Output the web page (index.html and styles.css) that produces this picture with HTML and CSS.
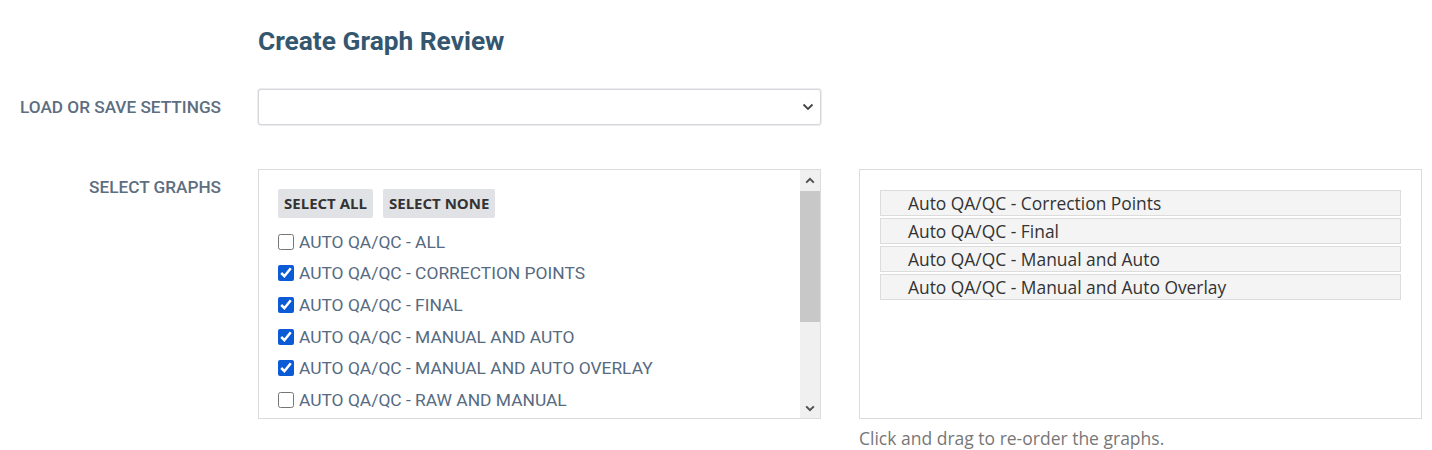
FILE: index.html
```html
<!DOCTYPE html>
<html lang="en">
<head>
  <meta charset="UTF-8" />
  <title>Create Graph Review</title>
  <link rel="stylesheet" href="styles.css">
</head>
<body>

  <div class="page">
    <div class="row title-row">
      <div class="label"></div>
      <h1 class="title">Create Graph Review</h1>
    </div>

    <div class="row settings-row">
      <label class="label" for="settings">Load or save settings</label>
      <div class="select-wrap">
        <select id="settings" class="settings-select">
          <option value=""></option>
        </select>
        <svg class="chevron" width="12" height="8" viewBox="0 0 12 8">
          <path d="M1.5 1.5 L6 6 L10.5 1.5" fill="none" stroke="#444" stroke-width="1.8"/>
        </svg>
      </div>
    </div>

    <div class="row graphs-row">
      <div class="label">Select graphs</div>

      <div class="graph-list">
        <div class="list-body">
          <div class="list-buttons">
            <button onclick="selectAll(true)">SELECT ALL</button>
            <button onclick="selectAll(false)">SELECT NONE</button>
          </div>
          <label class="graph-item"><input type="checkbox"> Auto QA/QC - All</label>
          <label class="graph-item"><input type="checkbox" checked> Auto QA/QC - Correction Points</label>
          <label class="graph-item"><input type="checkbox" checked> Auto QA/QC - Final</label>
          <label class="graph-item"><input type="checkbox" checked> Auto QA/QC - Manual and Auto</label>
          <label class="graph-item"><input type="checkbox" checked> Auto QA/QC - Manual and Auto Overlay</label>
          <label class="graph-item"><input type="checkbox"> Auto QA/QC - Raw and Manual</label>
        </div>
        <div class="scrollbar">
          <div class="scroll-btn">
            <svg width="10" height="7" viewBox="0 0 10 7"><path d="M1.2 5.6 L5 1.8 L8.8 5.6" fill="none" stroke="#505050" stroke-width="2"/></svg>
          </div>
          <div class="scroll-thumb"></div>
          <div class="scroll-track"></div>
          <div class="scroll-btn down">
            <svg width="10" height="7" viewBox="0 0 10 7"><path d="M1.2 1.4 L5 5.2 L8.8 1.4" fill="none" stroke="#505050" stroke-width="2"/></svg>
          </div>
        </div>
      </div>

      <div class="order-col">
        <ul class="order-list">
          <li>Auto QA/QC - Correction Points</li>
          <li>Auto QA/QC - Final</li>
          <li>Auto QA/QC - Manual and Auto</li>
          <li>Auto QA/QC - Manual and Auto Overlay</li>
        </ul>
        <p class="help">Click and drag to re-order the graphs.</p>
      </div>
    </div>
  </div>

  <script>
    function selectAll(on) {
      document.querySelectorAll('.graph-item input').forEach(function (cb) {
        cb.checked = on;
      });
    }
  </script>
</body>
</html>
```

FILE: styles.css
```css
body {
  margin: 0;
  background: #ffffff;
  font-family: Roboto, 'Liberation Sans', sans-serif;
  color: #333;
}
.page {
  padding-top: 25px;
}
.row {
  display: flex;
  gap: 37px;
}
.label {
  width: 221px;
  flex-shrink: 0;
  text-align: right;
  text-transform: uppercase;
  font-size: 17.2px;
  font-weight: 500;
  color: #5d6e80;
}
.title {
  margin: 0;
  font-size: 26.3px;
  line-height: 32px;
  font-weight: 700;
  color: #34566f;
}
.settings-row {
  margin-top: 32px;
  align-items: center;
}
.select-wrap {
  position: relative;
  width: 563px;
}
.settings-select {
  display: block;
  width: 100%;
  height: 36px;
  border: 1px solid #d6d6db;
  box-shadow: 0 0 0 1px #ececef;
  border-radius: 3px;
  background: #fff;
  appearance: none;
  font-size: 16px;
}
.chevron {
  position: absolute;
  right: 7px;
  top: 14px;
  pointer-events: none;
}
.graphs-row {
  margin-top: 44px;
}
.graphs-row > .label {
  padding-top: 8px;
}
.graph-list {
  display: flex;
  width: 563px;
  height: 250px;
  box-sizing: border-box;
  border: 1px solid #dcdcdc;
  overflow: hidden;
}
.list-body {
  flex: 1;
  padding: 19px 19px 0;
  overflow: hidden;
}
.list-buttons {
  display: flex;
  gap: 10px;
  margin-bottom: 8px;
}
.list-buttons button {
  font-family: 'Open Sans', sans-serif;
  font-weight: 700;
  font-size: 15px;
  color: #333;
  background: #e1e2e5;
  border: none;
  border-radius: 2px;
  height: 29px;
  padding: 0 6px 1px;
  cursor: pointer;
}
.graph-item {
  display: flex;
  align-items: center;
  gap: 5px;
  height: 31.6px;
  text-transform: uppercase;
  font-size: 17.4px;
  color: #566a80;
  white-space: nowrap;
}
.graph-item input {
  width: 16px;
  height: 16px;
  margin: 0;
  flex-shrink: 0;
  accent-color: #0b5ad6;
}
.scrollbar {
  width: 20px;
  flex-shrink: 0;
  display: flex;
  flex-direction: column;
  background: #f0f0f0;
}
.scroll-btn {
  height: 21px;
  display: flex;
  align-items: center;
  justify-content: center;
}
.scroll-btn.down {
  height: 20px;
}
.scroll-thumb {
  height: 131px;
  background: #c8c8c8;
}
.scroll-track {
  flex: 1;
}
.order-col {
  width: 563px;
  margin-left: 1px;
}
.order-list {
  list-style: none;
  margin: 0;
  height: 250px;
  box-sizing: border-box;
  border: 1px solid #dcdcdc;
  padding: 20px 20px 0;
}
.order-list li {
  font-family: 'Open Sans', sans-serif;
  font-size: 17.4px;
  line-height: 24px;
  color: #333;
  background: #f4f4f4;
  border: 1px solid #dcdcdc;
  padding-left: 27px;
  margin-bottom: 2px;
  cursor: move;
}
.help {
  margin: 7px 0 0;
  font-family: 'Open Sans', sans-serif;
  font-size: 17.5px;
  color: #777;
}
```
